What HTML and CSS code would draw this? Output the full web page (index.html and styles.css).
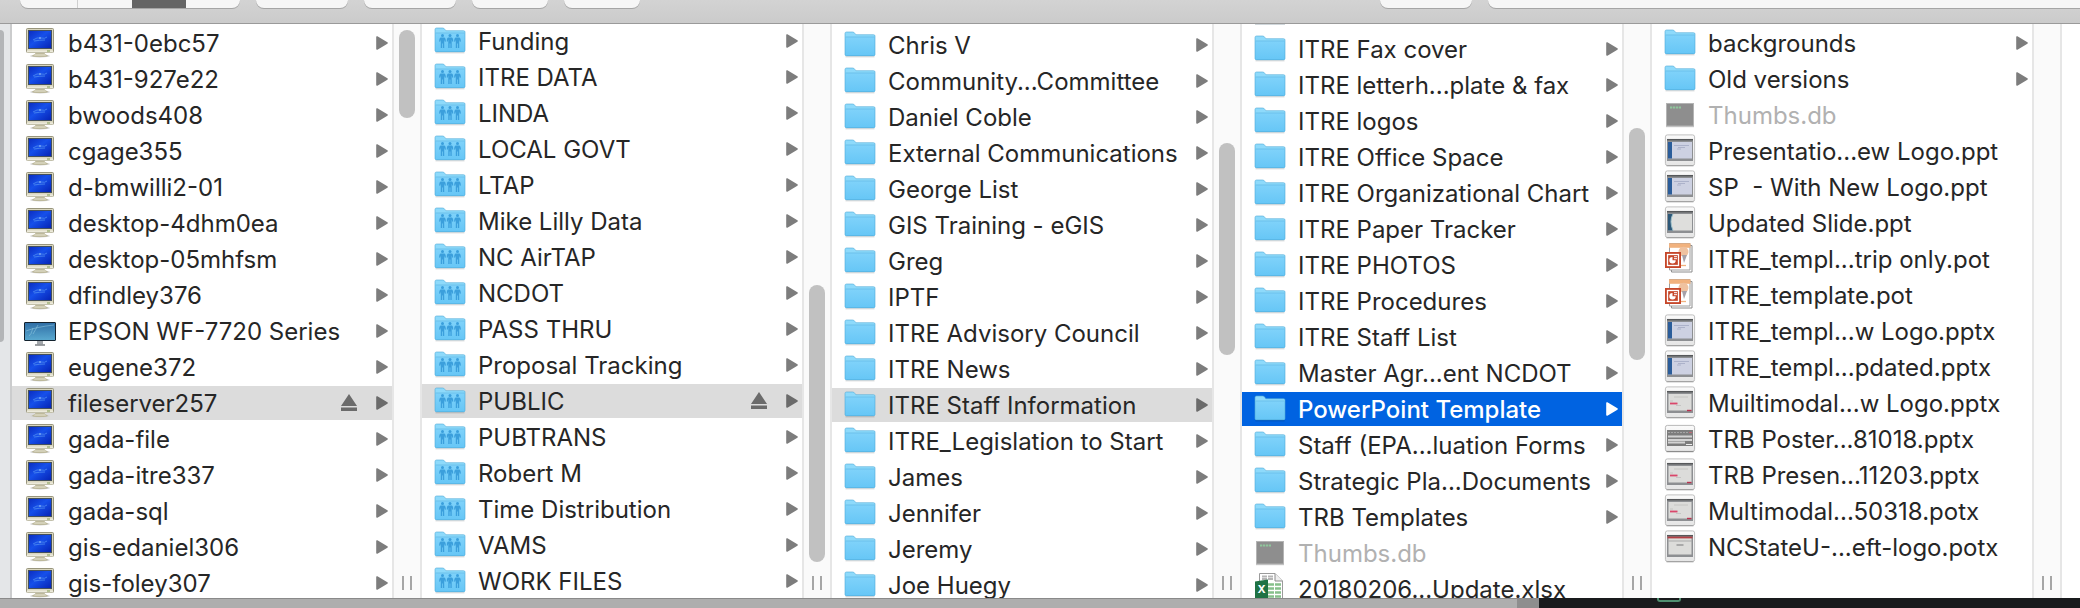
FILE: index.html
```html
<!DOCTYPE html>
<html lang="en">
<head>
<meta charset="utf-8">
<title>PowerPoint Template</title>
<link rel="stylesheet" href="styles.css">
</head>
<body>
<svg class="defs" aria-hidden="true">
  <defs>
    <linearGradient id="fold" x1="0" y1="0" x2="0" y2="1"><stop offset="0" stop-color="#7fd2fa"/><stop offset="1" stop-color="#66c6f6"/></linearGradient>
    <linearGradient id="crt" x1="0" y1="0" x2="1" y2="1"><stop offset="0" stop-color="#0a2cc0"/><stop offset=".45" stop-color="#1650ea"/><stop offset="1" stop-color="#0522b4"/></linearGradient>
    <linearGradient id="lcd" x1="0" y1="0" x2="0" y2="1"><stop offset="0" stop-color="#2f6ea6"/><stop offset="1" stop-color="#5aaad0"/></linearGradient>
    <linearGradient id="frame" x1="0" y1="0" x2="0" y2="1"><stop offset="0" stop-color="#fafafa"/><stop offset="1" stop-color="#e6e6e6"/></linearGradient>
  </defs>
  <symbol id="pc" viewBox="0 0 32 34">
    <ellipse cx="16" cy="30" rx="10" ry="1.5" fill="#d2d2d2"/>
    <path d="M12 25h8l1 3 3 1.500q0 1.500-8 1.500t-8-1.500L11 28z" fill="#bdb99c"/>
    <path d="M11 28.500h10l1 1H10z" fill="#e9e7d4"/>
    <rect x="2.500" y="2.500" width="27" height="24" rx="1" fill="#d9d6bf" stroke="#98957c"/>
    <path d="M3 25.500h26" stroke="#eceadb" stroke-width="2"/>
    <rect x="4.500" y="4.500" width="23" height="18" fill="url(#crt)" stroke="#44505c"/>
    <path d="M9 14q4-3 8-2t6-1M10 15q6-1 11-1" stroke="#4e8cf0" fill="none" stroke-width=".8"/>
    <circle cx="16" cy="12" r=".8" fill="#a8ccff"/>
    <path d="M23 25h3" stroke="#7d9a4c"/>
  </symbol>
  <symbol id="display" viewBox="0 0 32 34">
    <path d="M13 27h6v3.500h-6z" fill="#a3a7ab"/><path d="M11 31h10" stroke="#7d8184" stroke-width="1.500"/>
    <rect x=".5" y="8.500" width="31" height="18" rx=".5" fill="url(#lcd)" stroke="#14222e"/>
    <path d="M5 22q2-1 4-8M9 20q3-5 5-9M2 17q10-4 28-6" stroke="#9cd3e6" fill="none" stroke-width=".8" opacity=".6"/>
  </symbol>
  <symbol id="folder" viewBox="0 0 32 34">
    <path d="M1.500 28.800h29" stroke="#000" opacity=".18"/>
    <path d="M1 5.500q0-1.500 1.500-1.500h6q1.500 0 2.300 1.300l1 1.400H29.500q1.500 0 1.500 1.300V12H1z" fill="#8edafb"/>
    <path d="M1 9.300h30V26.500q0 1.500-1.500 1.500h-27Q1 28 1 26.500z" fill="url(#fold)"/>
    <path d="M1 5.500v21q0 1.200 1.500 1.200h27q1.500 0 1.500-1.200V8q0-1.300-1.500-1.300H11.800l-1-1.400Q10 4 8.500 4h-6Q1 4 1 5.500z" fill="none" stroke="#4fa9d6" stroke-width=".6"/>
    <path d="M1.500 9h29" stroke="#5bb6e4" stroke-width=".7"/>
  </symbol>
  <symbol id="man" viewBox="0 0 7 15">
    <circle cx="3.500" cy="1.600" r="1.500"/>
    <path d="M1.500 3.600h4q1.300.6 1.400 4l-1 .2-.7-2V14H3.900V9.500h-.8V14H1.800V5.800l-.7 2-1-.2q.1-3.400 1.400-4z"/>
  </symbol>
  <symbol id="shared" viewBox="0 0 32 34">
    <use href="#folder" width="32" height="34"/>
    <g fill="#3b9fdc"><use href="#man" x="5" y="10" width="7" height="15"/><use href="#man" x="12.500" y="10" width="7" height="15"/><use href="#man" x="20" y="10" width="7" height="15"/></g>
  </symbol>
  <symbol id="exec" viewBox="0 0 32 34">
    <path d="M2 28.700h28" stroke="#000" opacity=".22"/>
    <rect x="2.500" y="5.500" width="27" height="22.500" fill="#8e8e8e" stroke="#b4b4b4"/>
    <path d="M6 9.500h11" stroke="#8fc79c" stroke-width="2" stroke-dasharray="2.300 .7"/>
  </symbol>
  <symbol id="slide" viewBox="0 0 32 34">
    <rect x="1.400" y=".9" width="29.200" height="30.600" rx="2" fill="url(#frame)" stroke="#b9b9b9" stroke-width=".9"/>
    <path d="M2.500 31.800h27" stroke="#8d8d8d" stroke-width=".8"/>
    <rect x="3" y="5" width="26" height="22" fill="#8d8f92"/><path d="M3 5.700h26" stroke="#56585a" stroke-width="1.500"/>
  </symbol>
  <symbol id="blue" viewBox="0 0 32 34">
    <use href="#slide" width="32" height="34"/>
    <path d="M4 8h24v16.500H4z" fill="#cdd1e2"/><path d="M4 8h4v16.500H4z" fill="#2b5d9a"/>
    <path d="M10 11.500h15M14 13.500h7M13 15h4" stroke="#a3a9c4" stroke-width=".8"/>
  </symbol>
  <symbol id="curve" viewBox="0 0 32 34">
    <use href="#slide" width="32" height="34"/>
    <path d="M4 8h24v16.500H4z" fill="#dededc"/><path d="M4 8h5q-4 7 0 16.500H4z" fill="#2d5878"/><path d="M9 8q-4 7 0 16.500" stroke="#9ec1cb" fill="none"/>
  </symbol>
  <symbol id="red" viewBox="0 0 32 34">
    <use href="#slide" width="32" height="34"/>
    <path d="M4.500 8h23v16.500h-23z" fill="#dcdcda"/>
    <path d="M10 11h14M6 15h3M12 19.500h5" stroke="#bfbfbd" stroke-width=".8"/>
    <path d="M6 17.500h7.500" stroke="#d9476b" stroke-width="1.800"/><path d="M23 24.500h4.500" stroke="#b9324f" stroke-width="1.400"/>
  </symbol>
  <symbol id="poster" viewBox="0 0 32 34">
    <rect x="1.400" y="3.400" width="29.200" height="26" rx="2" fill="url(#frame)" stroke="#b0b0b0" stroke-width=".9"/>
    <path d="M2.500 29.700h27" stroke="#808080"/>
    <rect x="3" y="8" width="26" height="16" fill="#7d7d7d"/>
    <path d="M4 10.500h24" stroke="#a5a5a5" stroke-dasharray="2 1"/><path d="M25 10.500h3" stroke="#c06a78"/>
    <path d="M4 14.500h24M4 18h24M4 20.500h17" stroke="#d3d3d3" stroke-width="2"/><path d="M22 22.500h6" stroke="#eee" stroke-width="1"/>
  </symbol>
  <symbol id="topbar" viewBox="0 0 32 34">
    <use href="#slide" width="32" height="34"/>
    <path d="M4.500 8h23v16.500h-23z" fill="#dcdcda"/><path d="M3.500 7.500h25" stroke="#b33f45" stroke-width="1.800"/>
    <path d="M4 11h24" stroke="#a9a9a9"/><path d="M12.500 15h7" stroke="#a9a9a9" stroke-width="2"/>
  </symbol>
  <symbol id="pot" viewBox="0 0 32 34">
    <path d="M7.500 3.500h20.500V30H7.500z" fill="#fff" stroke="#8c8c8c"/><path d="M5.500 1.500H26V28H5.500z" fill="#fff" stroke="#9c9c9c"/>
    <path d="M5 1.300h21.500v4.500H5z" fill="#f1b27e"/>
    <path d="M17 14a5 5 0 1 1 5 0z" fill="#efc2a0"/><path d="M18 13h5l-3 8z" fill="#a6a1a8"/><path d="M17 23.500h5" stroke="#f1b27e" stroke-width="1.300"/>
    <rect x="1" y="10" width="16" height="16" fill="#c6472a"/><rect x="3.500" y="12.500" width="11" height="11" fill="none" stroke="#fff" stroke-width="1.300"/>
    <path d="M8.500 15a3.200 3.200 0 1 0 3.200 3.200H8.500z" fill="#fff"/><path d="M10 14.700h3M10 16.700h3" stroke="#fff"/>
  </symbol>
  <symbol id="xls" viewBox="0 0 32 34">
    <path d="M5.500 1.500H21l7.500 7.500v24h-23z" fill="#fff" stroke="#9b9b9b"/><path d="M21 1.500V9h7.500" fill="#eee" stroke="#8b8b8b"/>
    <path d="M8 4.500h11M8 7h11" stroke="#b5b5b5" stroke-width="1.800" stroke-dasharray="5 1"/>
    <path d="M14 12.500h13M14 16.500h13M14 20.500h13M14 24.500h13" stroke="#86c08b" stroke-width="2.600" stroke-dasharray="6 1"/>
    <path d="M1 9.500 14 7.500v24L1 29.500z" fill="#1f7244"/>
    <text x="3.500" y="20.500" font-family="Inter, sans-serif" font-size="11" font-weight="700" fill="#fff">X</text>
  </symbol>
  <symbol id="arrow" viewBox="0 0 12 14"><path d="M1 1v12l10-6z" fill="currentColor" stroke="currentColor" stroke-width="1.600" stroke-linejoin="round"/></symbol>
  <symbol id="eject" viewBox="0 0 16 18"><path d="M8 0l8 12H0zM0 13.500h16V17H0z" fill="currentColor"/></symbol>
</svg>

<header class="toolbar">
  <div class="segments">
    <button aria-label="Icon view"></button><button aria-label="List view"></button><button class="on" aria-label="Column view"></button><button aria-label="Gallery view"></button>
  </div>
  <button class="tool wide" aria-label="Arrange"></button>
  <button class="tool wide" aria-label="Action"></button>
  <button class="tool" aria-label="Share"></button>
  <button class="tool" aria-label="Tags"></button>
  <button class="tool wide push" aria-label="Connect"></button>
  <input class="search" type="search" aria-label="Search">
</header>

<main class="browser">
  <aside class="sidebar"><div class="side-thumb"></div></aside>

  <section class="column">
    <ul class="list start-2">
      <li><svg><use href="#pc"/></svg><button class="name">b431-0ebc57</button><svg class="arrow"><use href="#arrow"/></svg></li>
      <li><svg><use href="#pc"/></svg><button class="name">b431-927e22</button><svg class="arrow"><use href="#arrow"/></svg></li>
      <li><svg><use href="#pc"/></svg><button class="name">bwoods408</button><svg class="arrow"><use href="#arrow"/></svg></li>
      <li><svg><use href="#pc"/></svg><button class="name">cgage355</button><svg class="arrow"><use href="#arrow"/></svg></li>
      <li><svg><use href="#pc"/></svg><button class="name">d-bmwilli2-01</button><svg class="arrow"><use href="#arrow"/></svg></li>
      <li><svg><use href="#pc"/></svg><button class="name">desktop-4dhm0ea</button><svg class="arrow"><use href="#arrow"/></svg></li>
      <li><svg><use href="#pc"/></svg><button class="name">desktop-05mhfsm</button><svg class="arrow"><use href="#arrow"/></svg></li>
      <li><svg><use href="#pc"/></svg><button class="name">dfindley376</button><svg class="arrow"><use href="#arrow"/></svg></li>
      <li><svg><use href="#display"/></svg><button class="name">EPSON WF-7720 Series</button><svg class="arrow"><use href="#arrow"/></svg></li>
      <li><svg><use href="#pc"/></svg><button class="name">eugene372</button><svg class="arrow"><use href="#arrow"/></svg></li>
      <li class="open"><svg><use href="#pc"/></svg><button class="name">fileserver257</button><button class="eject" aria-label="Eject"><svg><use href="#eject"/></svg></button><svg class="arrow"><use href="#arrow"/></svg></li>
      <li><svg><use href="#pc"/></svg><button class="name">gada-file</button><svg class="arrow"><use href="#arrow"/></svg></li>
      <li><svg><use href="#pc"/></svg><button class="name">gada-itre337</button><svg class="arrow"><use href="#arrow"/></svg></li>
      <li><svg><use href="#pc"/></svg><button class="name">gada-sql</button><svg class="arrow"><use href="#arrow"/></svg></li>
      <li><svg><use href="#pc"/></svg><button class="name">gis-edaniel306</button><svg class="arrow"><use href="#arrow"/></svg></li>
      <li><svg><use href="#pc"/></svg><button class="name">gis-foley307</button><svg class="arrow"><use href="#arrow"/></svg></li>
    </ul>
    <div class="gutter"><div class="track"><div class="thumb" style="top:1%;height:16%"></div></div><div class="grip"></div></div>
  </section>

  <section class="column">
    <ul class="list">
      <li><svg><use href="#shared"/></svg><button class="name">Funding</button><svg class="arrow"><use href="#arrow"/></svg></li>
      <li><svg><use href="#shared"/></svg><button class="name">ITRE DATA</button><svg class="arrow"><use href="#arrow"/></svg></li>
      <li><svg><use href="#shared"/></svg><button class="name">LINDA</button><svg class="arrow"><use href="#arrow"/></svg></li>
      <li><svg><use href="#shared"/></svg><button class="name">LOCAL GOVT</button><svg class="arrow"><use href="#arrow"/></svg></li>
      <li><svg><use href="#shared"/></svg><button class="name">LTAP</button><svg class="arrow"><use href="#arrow"/></svg></li>
      <li><svg><use href="#shared"/></svg><button class="name">Mike Lilly Data</button><svg class="arrow"><use href="#arrow"/></svg></li>
      <li><svg><use href="#shared"/></svg><button class="name">NC AirTAP</button><svg class="arrow"><use href="#arrow"/></svg></li>
      <li><svg><use href="#shared"/></svg><button class="name">NCDOT</button><svg class="arrow"><use href="#arrow"/></svg></li>
      <li><svg><use href="#shared"/></svg><button class="name">PASS THRU</button><svg class="arrow"><use href="#arrow"/></svg></li>
      <li><svg><use href="#shared"/></svg><button class="name">Proposal Tracking</button><svg class="arrow"><use href="#arrow"/></svg></li>
      <li class="open"><svg><use href="#shared"/></svg><button class="name">PUBLIC</button><button class="eject" aria-label="Eject"><svg><use href="#eject"/></svg></button><svg class="arrow"><use href="#arrow"/></svg></li>
      <li><svg><use href="#shared"/></svg><button class="name">PUBTRANS</button><svg class="arrow"><use href="#arrow"/></svg></li>
      <li><svg><use href="#shared"/></svg><button class="name">Robert M</button><svg class="arrow"><use href="#arrow"/></svg></li>
      <li><svg><use href="#shared"/></svg><button class="name">Time Distribution</button><svg class="arrow"><use href="#arrow"/></svg></li>
      <li><svg><use href="#shared"/></svg><button class="name">VAMS</button><svg class="arrow"><use href="#arrow"/></svg></li>
      <li><svg><use href="#shared"/></svg><button class="name">WORK FILES</button><svg class="arrow"><use href="#arrow"/></svg></li>
    </ul>
    <div class="gutter"><div class="track"><div class="thumb" style="top:47.3%;height:50.2%"></div></div><div class="grip"></div></div>
  </section>

  <section class="column">
    <ul class="list start-4">
      <li><svg><use href="#folder"/></svg><button class="name">Chris V</button><svg class="arrow"><use href="#arrow"/></svg></li>
      <li><svg><use href="#folder"/></svg><button class="name">Community...Committee</button><svg class="arrow"><use href="#arrow"/></svg></li>
      <li><svg><use href="#folder"/></svg><button class="name">Daniel Coble</button><svg class="arrow"><use href="#arrow"/></svg></li>
      <li><svg><use href="#folder"/></svg><button class="name">External Communications</button><svg class="arrow"><use href="#arrow"/></svg></li>
      <li><svg><use href="#folder"/></svg><button class="name">George List</button><svg class="arrow"><use href="#arrow"/></svg></li>
      <li><svg><use href="#folder"/></svg><button class="name">GIS Training - eGIS</button><svg class="arrow"><use href="#arrow"/></svg></li>
      <li><svg><use href="#folder"/></svg><button class="name">Greg</button><svg class="arrow"><use href="#arrow"/></svg></li>
      <li><svg><use href="#folder"/></svg><button class="name">IPTF</button><svg class="arrow"><use href="#arrow"/></svg></li>
      <li><svg><use href="#folder"/></svg><button class="name">ITRE Advisory Council</button><svg class="arrow"><use href="#arrow"/></svg></li>
      <li><svg><use href="#folder"/></svg><button class="name">ITRE News</button><svg class="arrow"><use href="#arrow"/></svg></li>
      <li class="open"><svg><use href="#folder"/></svg><button class="name">ITRE Staff Information</button><svg class="arrow"><use href="#arrow"/></svg></li>
      <li><svg><use href="#folder"/></svg><button class="name">ITRE_Legislation to Start</button><svg class="arrow"><use href="#arrow"/></svg></li>
      <li><svg><use href="#folder"/></svg><button class="name">James</button><svg class="arrow"><use href="#arrow"/></svg></li>
      <li><svg><use href="#folder"/></svg><button class="name">Jennifer</button><svg class="arrow"><use href="#arrow"/></svg></li>
      <li><svg><use href="#folder"/></svg><button class="name">Jeremy</button><svg class="arrow"><use href="#arrow"/></svg></li>
      <li><svg><use href="#folder"/></svg><button class="name">Joe Huegy</button><svg class="arrow"><use href="#arrow"/></svg></li>
    </ul>
    <div class="gutter"><div class="track"><div class="thumb" style="top:21.6%;height:38.3%"></div></div><div class="grip"></div></div>
  </section>

  <section class="column">
    <ul class="list scrolled">
      <li><svg><use href="#folder"/></svg><button class="name">ITRE Fax cover</button><svg class="arrow"><use href="#arrow"/></svg></li>
      <li><svg><use href="#folder"/></svg><button class="name">ITRE letterh...plate &amp; fax</button><svg class="arrow"><use href="#arrow"/></svg></li>
      <li><svg><use href="#folder"/></svg><button class="name">ITRE logos</button><svg class="arrow"><use href="#arrow"/></svg></li>
      <li><svg><use href="#folder"/></svg><button class="name">ITRE Office Space</button><svg class="arrow"><use href="#arrow"/></svg></li>
      <li><svg><use href="#folder"/></svg><button class="name">ITRE Organizational Chart</button><svg class="arrow"><use href="#arrow"/></svg></li>
      <li><svg><use href="#folder"/></svg><button class="name">ITRE Paper Tracker</button><svg class="arrow"><use href="#arrow"/></svg></li>
      <li><svg><use href="#folder"/></svg><button class="name">ITRE PHOTOS</button><svg class="arrow"><use href="#arrow"/></svg></li>
      <li><svg><use href="#folder"/></svg><button class="name">ITRE Procedures</button><svg class="arrow"><use href="#arrow"/></svg></li>
      <li><svg><use href="#folder"/></svg><button class="name">ITRE Staff List</button><svg class="arrow"><use href="#arrow"/></svg></li>
      <li><svg><use href="#folder"/></svg><button class="name">Master Agr...ent NCDOT</button><svg class="arrow"><use href="#arrow"/></svg></li>
      <li class="selected"><svg><use href="#folder"/></svg><button class="name">PowerPoint Template</button><svg class="arrow"><use href="#arrow"/></svg></li>
      <li><svg><use href="#folder"/></svg><button class="name">Staff (EPA...luation Forms</button><svg class="arrow"><use href="#arrow"/></svg></li>
      <li><svg><use href="#folder"/></svg><button class="name">Strategic Pla...Documents</button><svg class="arrow"><use href="#arrow"/></svg></li>
      <li><svg><use href="#folder"/></svg><button class="name">TRB Templates</button><svg class="arrow"><use href="#arrow"/></svg></li>
      <li class="dim"><svg><use href="#exec"/></svg><button class="name">Thumbs.db</button></li>
      <li><svg><use href="#xls"/></svg><button class="name">20180206...Update.xlsx</button></li>
    </ul>
    <div class="gutter"><div class="track"><div class="thumb" style="top:18.8%;height:42%"></div></div><div class="grip"></div></div>
  </section>

  <section class="column">
    <ul class="list start-2">
      <li><svg><use href="#folder"/></svg><button class="name">backgrounds</button><svg class="arrow"><use href="#arrow"/></svg></li>
      <li><svg><use href="#folder"/></svg><button class="name">Old versions</button><svg class="arrow"><use href="#arrow"/></svg></li>
      <li class="dim"><svg><use href="#exec"/></svg><button class="name">Thumbs.db</button></li>
      <li><svg><use href="#blue"/></svg><button class="name">Presentatio...ew Logo.ppt</button></li>
      <li><svg><use href="#blue"/></svg><button class="name">SP  - With New Logo.ppt</button></li>
      <li><svg><use href="#curve"/></svg><button class="name">Updated Slide.ppt</button></li>
      <li><svg><use href="#pot"/></svg><button class="name">ITRE_templ...trip only.pot</button></li>
      <li><svg><use href="#pot"/></svg><button class="name">ITRE_template.pot</button></li>
      <li><svg><use href="#blue"/></svg><button class="name">ITRE_templ...w Logo.pptx</button></li>
      <li><svg><use href="#blue"/></svg><button class="name">ITRE_templ...pdated.pptx</button></li>
      <li><svg><use href="#red"/></svg><button class="name">Muiltimodal...w Logo.pptx</button></li>
      <li><svg><use href="#poster"/></svg><button class="name">TRB Poster...81018.pptx</button></li>
      <li><svg><use href="#red"/></svg><button class="name">TRB Presen...11203.pptx</button></li>
      <li><svg><use href="#red"/></svg><button class="name">Multimodal...50318.potx</button></li>
      <li><svg><use href="#topbar"/></svg><button class="name">NCStateU-...eft-logo.potx</button></li>
    </ul>
    <div class="gutter"><div class="track"></div><div class="grip"></div></div>
  </section>
</main>

<footer class="below">
  <div class="window-edge"></div>
  <div class="desktop"><span class="mark"></span></div>
</footer>
</body>
</html>
```
FILE: styles.css
```css
* { box-sizing: border-box; }

body {
  margin: 0;
  height: 100vh;
  display: flex;
  flex-direction: column;
  overflow: hidden;
  background: #fff;
  color: #262626;
  font: 24px/34px Inter, "Liberation Sans", sans-serif;
}

button { margin: 0; padding: 0; border: 0; background: none; color: inherit; font: inherit; }
.defs { flex: none; width: 0; height: 0; }

.toolbar {
  flex: none;
  display: flex;
  align-items: flex-start;
  gap: 16px;
  height: 24px;
  padding-left: 20px;
  background: linear-gradient(#d3d3d3, #cbcbcb);
  border-bottom: 1px solid #9a9a9a;
}
.segments, .tool, .search {
  height: 8px;
  background: #f6f6f6;
  border-radius: 0 0 8px 8px;
  box-shadow: 0 1px 0 #a5a5a5;
}
.segments { display: flex; width: 220px; overflow: hidden; }
.segments button { flex: 1; height: 8px; }
.segments button:first-child { flex: 0 0 58px; border-right: 1px solid #cfcfcf; }
.segments .on { background: #656565; }
.tool { width: 76px; }
.wide { width: 92px; }
.push { margin-left: auto; }
.search { width: 592px; padding: 0; border: 0; border-radius: 0 0 0 8px; }

.browser { flex: 1; min-height: 0; display: flex; }

.sidebar {
  flex: none;
  width: 12px;
  padding-top: 6px;
  background: #e4e6e8;
  border-right: 2px solid #cbcccd;
}
.side-thumb { width: 4px; height: 55%; border-radius: 0 8px 8px 0; background: #b3b5b7; }

.column { flex: none; display: flex; width: 410px; overflow: hidden; border-right: 2px solid #e6e6e6; }

.list { flex: 1; min-width: 0; margin: 0; padding: 0; list-style: none; }
.start-2 { padding-top: 2px; }
.start-4 { padding-top: 4px; }
/* lower edge of the folder icon that is scrolled out above the list */
.scrolled::before {
  content: "";
  display: block;
  width: 30px;
  height: 1px;
  margin: 0 0 7px 13px;
  background: #cfd6da;
}

.list li {
  display: flex;
  align-items: center;
  height: 34px;
  margin-bottom: 2px;
  padding: 0 4px 0 12px;
}
.list li > svg { flex: none; width: 32px; height: 34px; }
.list .name { flex: 1; min-width: 0; padding: 2px 0 0 12px; text-align: left; white-space: pre; }
.list li > .arrow { width: 12px; height: 14px; color: #7d7d7d; }
.list .open { background: #dcdcdc; }
.list .open .arrow, .eject { color: #6b6b6b; }
.list .selected { background: #0063e1; color: #fff; font-weight: 500; }
.list .selected .arrow { color: #fff; }
.list .dim { color: #b1b1b1; }
.eject { display: flex; margin-right: 19px; }
.eject svg { width: 16px; height: 18px; }

.gutter {
  flex: none;
  display: flex;
  flex-direction: column;
  align-items: center;
  width: 28px;
  padding-bottom: 8px;
  background: #fafafa;
  border-left: 2px solid #e6e6e6;
}
.track { position: relative; flex: 1; width: 16px; }
.thumb { position: absolute; left: 0; width: 16px; border-radius: 8px; background: #c1c1c1; }
.grip { width: 10px; height: 14px; border: solid #a6a6a6; border-width: 0 2px; }

.below { flex: none; display: flex; height: 10px; }
.window-edge {
  width: 74%;
  border-top: 1px solid #8a8a8a;
  border-right: 22px solid #8e8e8e;
  background: #aeaeae;
}
.desktop { flex: 1; padding-left: 118px; background: #191b1d; }
.mark { display: block; width: 24px; height: 4px; border: 2px solid #4f8f70; border-top: 0; border-radius: 0 0 3px 3px; }
```
